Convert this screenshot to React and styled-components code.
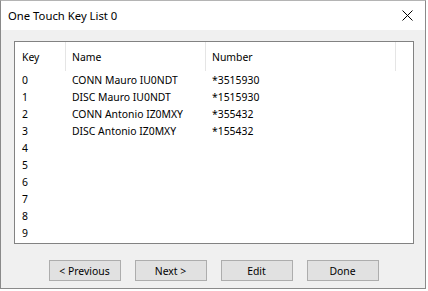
import React from "react";
import styled, { createGlobalStyle } from "styled-components";

const Global = createGlobalStyle`
  html, body {
    margin: 0;
    padding: 0;
    background: #ffffff;
  }
  body {
    font-family: "Noto Sans", "Open Sans", "Liberation Sans", sans-serif;
    font-size: 10.4px;
    color: #000;
  }
`;

const Window = styled.div`
  width: 424px;
  height: 287px;
  border: 1px solid #8a8a8a;
  border-top-color: #b4b4b4;
  display: flex;
  flex-direction: column;
  background: #f0f0f0;
`;

const TitleBar = styled.div`
  height: 29px;
  background: #ffffff;
  display: flex;
  align-items: center;
  justify-content: space-between;
  padding: 0 12px 0 7px;

  & h1 {
    margin: 0;
    font-size: 11.3px;
    font-weight: normal;
  }
`;

const Body = styled.div`
  flex: 1;
  display: flex;
  flex-direction: column;
  padding: 11px 12px 0 13px;
`;

const ListBox = styled.div`
  width: 398px;
  height: 201px;
  border: 1px solid #828282;
  background: #ffffff;
`;

const Row = styled.div`
  display: grid;
  grid-template-columns: 51px 140px 190px 1fr;
  height: ${(p) => (p.header ? "29px" : "17px")};
  align-items: center;
`;

const Cell = styled.div`
  height: 100%;
  display: flex;
  align-items: center;
  padding-left: ${(p) => (p.first ? "7px" : "6px")};
  border-right: ${(p) => (p.sep ? "1px solid #e5e5e5" : "none")};
  white-space: nowrap;
`;

const Buttons = styled.div`
  display: flex;
  justify-content: center;
  gap: 14px;
  margin-top: 16px;
`;

const Button = styled.button`
  width: 72px;
  height: 21px;
  border: 1px solid #adadad;
  background: #e1e1e1;
  font-family: inherit;
  font-size: 10.4px;
  color: #000;
  padding: 0;
`;

const entries = [
  { name: "CONN Mauro IU0NDT", number: "*3515930" },
  { name: "DISC Mauro IU0NDT", number: "*1515930" },
  { name: "CONN Antonio IZ0MXY", number: "*355432" },
  { name: "DISC Antonio IZ0MXY", number: "*155432" },
];

export default function App() {
  const rows = Array.from({ length: 10 }, (_, i) => entries[i] || { name: "", number: "" });
  return (
    <>
      <Global />
      <Window>
        <TitleBar>
          <h1>One Touch Key List 0</h1>
          <svg width="11" height="11" viewBox="0 0 11 11">
            <path d="M0.5 0.5 L10.5 10.5 M10.5 0.5 L0.5 10.5" stroke="#000" strokeWidth="1" />
          </svg>
        </TitleBar>
        <Body>
          <ListBox>
            <Row header>
              <Cell first sep>Key</Cell>
              <Cell sep>Name</Cell>
              <Cell sep>Number</Cell>
              <Cell />
            </Row>
            {rows.map((r, i) => (
              <Row key={i}>
                <Cell first>{i}</Cell>
                <Cell>{r.name}</Cell>
                <Cell>{r.number}</Cell>
                <Cell />
              </Row>
            ))}
          </ListBox>
          <Buttons>
            <Button>&lt; Previous</Button>
            <Button>Next &gt;</Button>
            <Button>Edit</Button>
            <Button>Done</Button>
          </Buttons>
        </Body>
      </Window>
    </>
  );
}
